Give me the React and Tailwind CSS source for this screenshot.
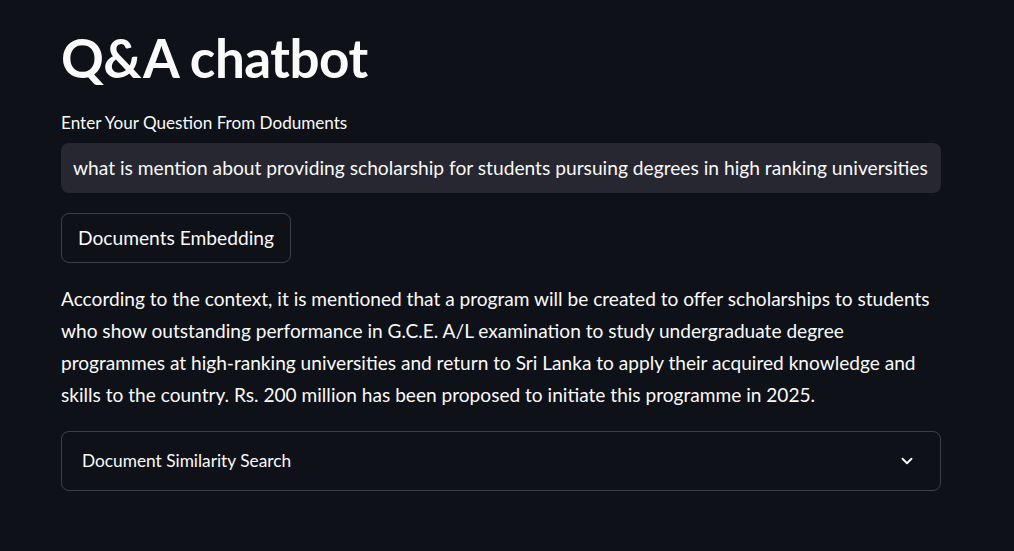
import { ChevronDown } from 'lucide-react';

const answer =
  'According to the context, it is mentioned that a program will be created to offer scholarships to students who show outstanding performance in G.C.E. A/L examination to study undergraduate degree programmes at high-ranking universities and return to Sri Lanka to apply their acquired knowledge and skills to the country. Rs. 200 million has been proposed to initiate this programme in 2025.';

export default function App() {
  return (
    <div className="min-h-screen bg-[#0e1117] text-[#fafafa] font-['Lato',sans-serif]">
      <div className="w-[880px] ml-[61px] pt-[26px]">
        <h1 className="text-[53px] font-bold leading-[64px] tracking-[-0.5px]">Q&amp;A chatbot</h1>

        <label className="block mt-[22px] text-[17.1px] leading-[22px]">Enter Your Question From Doduments</label>
        <div className="mt-[9px] h-[50px] rounded-[8px] bg-[#262730] flex items-center px-[12px] text-[19.2px]">
          what is mention about providing scholarship for students pursuing degrees in high ranking universities
        </div>

        <button className="mt-[20px] h-[50px] px-[16px] rounded-[8px] border border-[rgba(250,250,250,0.2)] text-[19.2px]">
          Documents Embedding
        </button>

        <p className="mt-[20px] text-[19.1px] leading-[32px]">{answer}</p>

        <div className="mt-[20px] h-[60px] rounded-[8px] border border-[rgba(250,250,250,0.2)] flex items-center justify-between pl-[20px] pr-[24px]">
          <span className="text-[17.3px]">Document Similarity Search</span>
          <ChevronDown size={18} strokeWidth={2.5} />
        </div>
      </div>
    </div>
  );
}
